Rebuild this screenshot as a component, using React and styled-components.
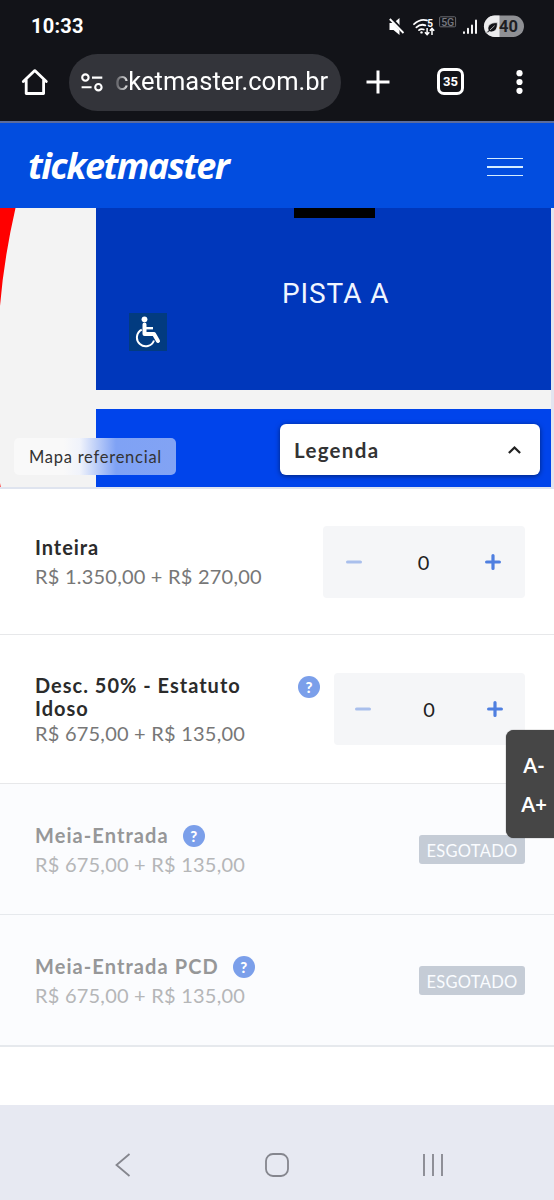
import React from "react";
import styled, { createGlobalStyle } from "styled-components";

const GlobalStyle = createGlobalStyle`
  *, *::before, *::after { box-sizing: border-box; }
  body { margin: 0; background: #fff; }
  button { border: 0; padding: 0; margin: 0; background: none; font: inherit; color: inherit; }
  svg { display: block; flex: none; }
`;

const Screen = styled.div`
  position: relative;
  display: flex;
  flex-direction: column;
  width: 554px;
  height: 1200px;
  overflow: hidden;
  background: #fff;
  font-family: Lato, "Open Sans", sans-serif;
`;

const StatusBar = styled.div`
  display: flex;
  align-items: center;
  justify-content: space-between;
  height: 52px;
  padding: 0 30px 0 31px;
  background: #121318;
  color: #fff;
`;

const Clock = styled.span`
  font: 700 20px/24px Roboto, sans-serif;
  letter-spacing: 0.25px;
`;

const StatusIcons = styled.div`
  display: flex;
  align-items: center;
`;

const BrowserBar = styled.div`
  display: flex;
  align-items: center;
  height: 71px;
  padding: 0 28px 10px 21px;
  background: #121318;
  border-bottom: 2px solid #5c6c9c;
  color: #fff;
`;

const AddressPill = styled.div`
  display: flex;
  align-items: center;
  width: 272px;
  height: 57px;
  margin: 1px 0 0 20px;
  padding-left: 12px;
  border-radius: 29px;
  background: #33343a;
`;

const Address = styled.span`
  margin: -2px 0 0 12px;
  font: 400 25.5px/32px Roboto, sans-serif;
  letter-spacing: 0.02px;
  white-space: nowrap;
  mask-image: linear-gradient(to right, rgba(0, 0, 0, 0.15), #000 15px);
`;

const NewTab = styled.button`
  margin-left: 25px;
`;

const TabCount = styled.button`
  display: grid;
  place-items: center;
  width: 27px;
  height: 27px;
  margin: 0 0 0 47px;
  border: 3px solid #fff;
  border-radius: 7px;
  font: 700 13px/15px Roboto, sans-serif;
`;

const SiteHeader = styled.header`
  display: flex;
  align-items: center;
  justify-content: space-between;
  height: 85px;
  padding: 0 31px 0 28px;
  background: #024ddf;
  color: #fff;
`;

const Logo = styled.span`
  font: italic 700 36px/50px "Open Sans", sans-serif;
  letter-spacing: -1.55px;
`;

const MenuButton = styled.button`
  display: flex;
  flex-direction: column;
  gap: 7px;
  width: 36px;
  margin-top: 3px;
`;

const MenuLine = styled.span`
  height: 1.6px;
  background: #d5ecff;
`;

const SeatMap = styled.section`
  position: relative;
  height: 281px;
  overflow: hidden;
  background: #f3f3f3;
  border-right: 3px solid #e2e5f0;
  border-bottom: 2px solid #dfe4ef;
`;

const StageCurve = styled.svg`
  position: absolute;
  left: 0;
  top: 0;
`;

const Sector = styled.div`
  position: absolute;
  left: 96px;
  right: 0;
  top: ${(p) => p.$top}px;
  height: ${(p) => p.$height}px;
  background: ${(p) => p.$color};
`;

const StageBlock = styled.div`
  width: 81px;
  height: 10px;
  margin-left: 198px;
  background: #000;
`;

const SectorName = styled.div`
  margin: 58px 0 0 186px;
  font: 400 28px/36px Roboto, sans-serif;
  letter-spacing: 0.9px;
  color: #f0f5ff;
`;

const AccessibleSign = styled.div`
  display: grid;
  place-items: center;
  width: 38px;
  height: 38px;
  margin: 1px 0 0 33px;
  background: #023b80;
`;

const MapTag = styled.div`
  position: absolute;
  left: 14px;
  top: 230px;
  width: 162px;
  height: 37px;
  padding-left: 15px;
  border-radius: 5px;
  background: linear-gradient(to right, #f9f9f9 50px, #f0f3fb 66px, #7fa2f5 102px, #82a3f4);
  font-size: 16.5px;
  line-height: 38px;
  letter-spacing: 0.75px;
  color: #333;
`;

const LegendBox = styled.button`
  position: absolute;
  left: 280px;
  top: 216px;
  display: flex;
  align-items: center;
  justify-content: space-between;
  width: 260px;
  height: 51px;
  padding: 0 18px 0 14px;
  border-radius: 6px;
  background: #fff;
  box-shadow: 0 1px 5px rgba(0, 0, 0, 0.5);
  font-size: 20.5px;
  font-weight: 700;
  letter-spacing: 1.3px;
  color: #333;
`;

const TicketRow = styled.div`
  display: flex;
  justify-content: space-between;
  height: ${(p) => p.$height}px;
  padding: ${(p) => p.$top}px 29px 0 35px;
  border-bottom: ${(p) => (p.$last ? 2 : 1)}px solid ${(p) => (p.$soldOut ? "#e6e9ed" : "#e7e8ea")};
  background: ${(p) => (p.$soldOut ? "#fbfcfe" : "#fff")};
`;

const TicketInfo = styled.div`
  display: flex;
  flex-direction: column;
  padding-top: ${(p) => p.$top || 0}px;
`;

const TitleLine = styled.div`
  display: flex;
  align-items: flex-start;
`;

const TicketTitle = styled.h3`
  margin: 0;
  width: ${(p) => (p.$width ? p.$width + "px" : "auto")};
  font-size: 20px;
  font-weight: 700;
  line-height: 23px;
  letter-spacing: ${(p) => p.$spacing}px;
  color: ${(p) => (p.$soldOut ? "#969798" : "#2b2b2b")};
`;

const Price = styled.div`
  margin-top: ${(p) => p.$gap}px;
  font-size: 20px;
  line-height: 24px;
  letter-spacing: 0.22px;
  white-space: nowrap;
  color: ${(p) => (p.$soldOut ? "#b5b6b8" : "#777")};
`;

const Help = styled.button`
  display: grid;
  place-items: center;
  width: 22px;
  height: 22px;
  margin: ${(p) => p.$top}px 0 0 14px;
  border-radius: 50%;
  background: #7b9fea;
  font: 900 15px/22px Lato, sans-serif;
  color: #fff;
`;

const Stepper = styled.div`
  display: flex;
  align-items: center;
  justify-content: space-between;
  width: ${(p) => p.$width}px;
  height: 72px;
  padding: 0 ${(p) => p.$right}px ${(p) => p.$bottom}px ${(p) => p.$left}px;
  border-radius: 4px;
  background: #f5f6f8;
  font: 400 20px/24px Lato, sans-serif;
  color: #222;
`;

const SoldOutTag = styled.span`
  width: 106px;
  height: 29px;
  margin-top: ${(p) => p.$top}px;
  border-radius: 3px;
  background: #c5ccd6;
  font-size: 16.5px;
  line-height: 33px;
  letter-spacing: 0.3px;
  text-align: center;
  color: #fafcff;
`;

const FontSizer = styled.aside`
  position: absolute;
  right: 0;
  top: 730px;
  display: flex;
  flex-direction: column;
  align-items: center;
  width: 48px;
  height: 108px;
  padding: 16px 0 0 8px;
  border-radius: 8px 0 0 8px;
  background: #464646;
  box-shadow: 0 0 1px #222;
  color: #fff;
`;

const SizeButton = styled.button`
  height: 39px;
  font: 700 20px/39px Lato, sans-serif;
`;

const SystemNav = styled.nav`
  display: flex;
  align-items: flex-start;
  justify-content: space-between;
  height: 95px;
  margin-top: auto;
  padding: 47px 110px 0 114px;
  background: #e7e9f2;
  color: #85868e;
`;

const HomeIcon = () => (
  <svg width="28" height="28" viewBox="0 0 28 28" fill="none" stroke="#fff" strokeWidth="2.8" strokeLinejoin="round" strokeLinecap="round">
    <path d="M2.3 13.6 13.8 2.6l11.5 11M5.2 11.5v14h17.4v-14" />
  </svg>
);

const TuneIcon = () => (
  <svg width="22" height="19" viewBox="0 0 22 19" fill="none" stroke="#fff" strokeWidth="2.1">
    <circle cx="4.4" cy="4.6" r="3.2" />
    <path d="M11 4.6h10.300M.6 14.2h10" />
    <circle cx="17.400" cy="14.200" r="3.200" />
  </svg>
);

const PlusIcon = () => (
  <svg width="24" height="24" viewBox="0 0 24 24" stroke="#fff" strokeWidth="3">
    <path d="M12 .5v23M.5 12h23" />
  </svg>
);

const MoreButton = styled.button`
  margin-left: auto;
  padding-right: 3px;
`;

const MoreIcon = () => (
  <svg width="7" height="26" viewBox="0 0 7 26" fill="#fff">
    <circle cx="3.5" cy="4.2" r="3.1" />
    <circle cx="3.5" cy="13" r="3.1" />
    <circle cx="3.5" cy="21.8" r="3.1" />
  </svg>
);

const StatusGlyphs = () => (
  <svg width="136" height="24" viewBox="0 0 136 24" fill="none">
    <path d="M1.5 9h4l6-5v17l-6-5h-4z" fill="#fff" />
    <path d="M2 3.4 17.5 20" stroke="#121318" strokeWidth="3.4" />
    <path d="M1.8 5 15.5 19" stroke="#fff" strokeWidth="1.8" />
    <g stroke="#fff" strokeWidth="1.8" strokeLinecap="round">
      <path d="M26 10.2q6.5-6 13-3.8M28.4 13.3q4.2-3.8 9-2M31 16.1q2.1-1.7 4.8-.6" />
    </g>
    <circle cx="33.5" cy="18.4" r="1.2" fill="#fff" />
    <text x="39.3" y="13" fontFamily="Roboto, sans-serif" fontWeight="700" fontSize="10" fill="#fff">5</text>
    <g stroke="#fff" strokeWidth="1.5">
      <path d="M39.1 14v6.4M36.9 18.2l2.2 2.4 2.2-2.4M44 21v-6.4M41.8 16.8l2.2-2.4 2.2 2.4" />
    </g>
    <rect x="51.6" y="2.8" width="16" height="10" rx="1" stroke="#696a6f" />
    <text x="53.2" y="11.6" textLength="13" fontFamily="Roboto, sans-serif" fontWeight="500" fontSize="10.5" fill="#777980">5G</text>
    <g stroke="#fff" strokeWidth="1.9" strokeLinecap="round">
      <path d="M76 18.2v.8M80 14.800V19M84 11.400V19M88 6.500V19" />
    </g>
    <rect x="96" y="1.500" width="40" height="21.500" rx="10.700" fill="#8f9094" />
    <path d="M106.700 1.500H111.500v21.500h-4.800a10.700 10.700 0 0 1 0-21.500" fill="#ececee" />
    <path d="M98 18.200c1-.3 1.800-1 2.300-1.800-1.400-4.800 2-7.900 9-7.800.3 5.400-1.300 9.200-6 9.300-1 0-1.500-.2-1.900-.4-.8.800-1.900 1.300-2.900 1.500zM102 16l4.600-4.300" fill="#121318" stroke="#ececee" strokeWidth=".7" />
    <text x="111" y="18.200" textLength="19" fontFamily="Roboto, sans-serif" fontWeight="700" fontSize="16.500" fill="#1d1e22">40</text>
  </svg>
);

const Wheelchair = () => (
  <svg width="26" height="32" viewBox="0 0 26 32" fill="none" stroke="#fff">
    <circle cx="9.5" cy="3.3" r="2.9" fill="#fff" stroke="none" />
    <path d="M9.500 8.500v9.500h9.500l4 7" strokeWidth="4" strokeLinejoin="round" strokeLinecap="round" />
    <path d="M9.500 12.200h8.500" strokeWidth="2.400" />
    <path d="M6.800 13.600A8.800 8.800 0 1 0 19 24.500" strokeWidth="2" />
  </svg>
);

const StepIcon = ({ plus }) => (
  <svg width="16" height="16" viewBox="0 0 16 16" stroke={plus ? "#4f7fe0" : "#a9bfec"} strokeWidth="3.2" strokeLinecap="round">
    <path d={plus ? "M8 1.600v12.800M1.600 8h12.800" : "M1.600 8h12.800"} />
  </svg>
);

const Counter = ({ width, left, right, bottom = 1 }) => (
  <Stepper $width={width} $left={left} $right={right} $bottom={bottom}>
    <button><StepIcon /></button>
    <span>0</span>
    <button><StepIcon plus /></button>
  </Stepper>
);

const SoldOutTicket = ({ title, height, last }) => (
  <TicketRow $height={height} $top={40} $soldOut $last={last}>
    <TicketInfo>
      <TitleLine>
        <TicketTitle $soldOut $spacing={1.08}>{title}</TicketTitle>
        <Help $top={1}>?</Help>
      </TitleLine>
      <Price $gap={5} $soldOut>R$ 675,00 + R$ 135,00</Price>
    </TicketInfo>
    <SoldOutTag $top={11}>ESGOTADO</SoldOutTag>
  </TicketRow>
);

export default function App() {
  return (
    <Screen>
      <GlobalStyle />
      <StatusBar>
        <Clock>10:33</Clock>
        <StatusIcons><StatusGlyphs /></StatusIcons>
      </StatusBar>
      <BrowserBar>
        <HomeIcon />
        <AddressPill>
          <TuneIcon />
          <Address>cketmaster.com.br</Address>
        </AddressPill>
        <NewTab><PlusIcon /></NewTab>
        <TabCount>35</TabCount>
        <MoreButton><MoreIcon /></MoreButton>
      </BrowserBar>

      <SiteHeader>
        <Logo>ticketmaster</Logo>
        <MenuButton aria-label="Menu"><MenuLine /><MenuLine /><MenuLine /></MenuButton>
      </SiteHeader>

      <SeatMap>
        <StageCurve width="20" height="281" viewBox="0 0 20 281" fill="#f00">
          <path d="M0 0h15.500Q4 50 0 98zM0 275l1 6H0z" />
        </StageCurve>
        <Sector $top={0} $height={182} $color="#0037bb">
          <StageBlock />
          <SectorName>PISTA A</SectorName>
          <AccessibleSign><Wheelchair /></AccessibleSign>
        </Sector>
        <Sector $top={201} $height={78} $color="#0044eb" />
        <MapTag>Mapa referencial</MapTag>
        <LegendBox>
          Legenda
          <svg width="15" height="10" viewBox="0 0 15 10" fill="none" stroke="#222" strokeWidth="2.300">
            <path d="m1.900 8 5.600-5.500 5.600 5.500" />
          </svg>
        </LegendBox>
      </SeatMap>

      <TicketRow $height={146} $top={37}>
        <TicketInfo $top={10}>
          <TicketTitle $spacing={0.95}>Inteira</TicketTitle>
          <Price $gap={5}>R$ 1.350,00 + R$ 270,00</Price>
        </TicketInfo>
        <Counter width={202} left={23} right={24} />
      </TicketRow>

      <TicketRow $height={149} $top={38}>
        <TicketInfo $top={1}>
          <TitleLine>
            <TicketTitle $width={249} $spacing={1}>Desc. 50% - Estatuto<br />Idoso</TicketTitle>
            <Help $top={2}>?</Help>
          </TitleLine>
          <Price $gap={1}>R$ 675,00 + R$ 135,00</Price>
        </TicketInfo>
        <Counter width={191} left={21} right={22} bottom={1} />
      </TicketRow>

      <SoldOutTicket title="Meia-Entrada" height={131} />
      <SoldOutTicket title="Meia-Entrada PCD" height={132} last />

      <SystemNav>
        <svg width="18" height="26" viewBox="0 0 18 26" fill="none" stroke="currentColor" strokeWidth="1.8">
          <path d="M15.500 2 2.500 13l13 11" />
        </svg>
        <svg width="24" height="26" viewBox="0 0 24 26" fill="none" stroke="currentColor" strokeWidth="1.8">
          <rect x="1" y="2" width="22" height="22" rx="7" />
        </svg>
        <svg width="22" height="26" viewBox="0 0 22 26" stroke="currentColor" strokeWidth="1.8">
          <path d="M2 2v22M11 2v22M20 2v22" />
        </svg>
      </SystemNav>

      <FontSizer>
        <SizeButton>A-</SizeButton>
        <SizeButton>A+</SizeButton>
      </FontSizer>
    </Screen>
  );
}
